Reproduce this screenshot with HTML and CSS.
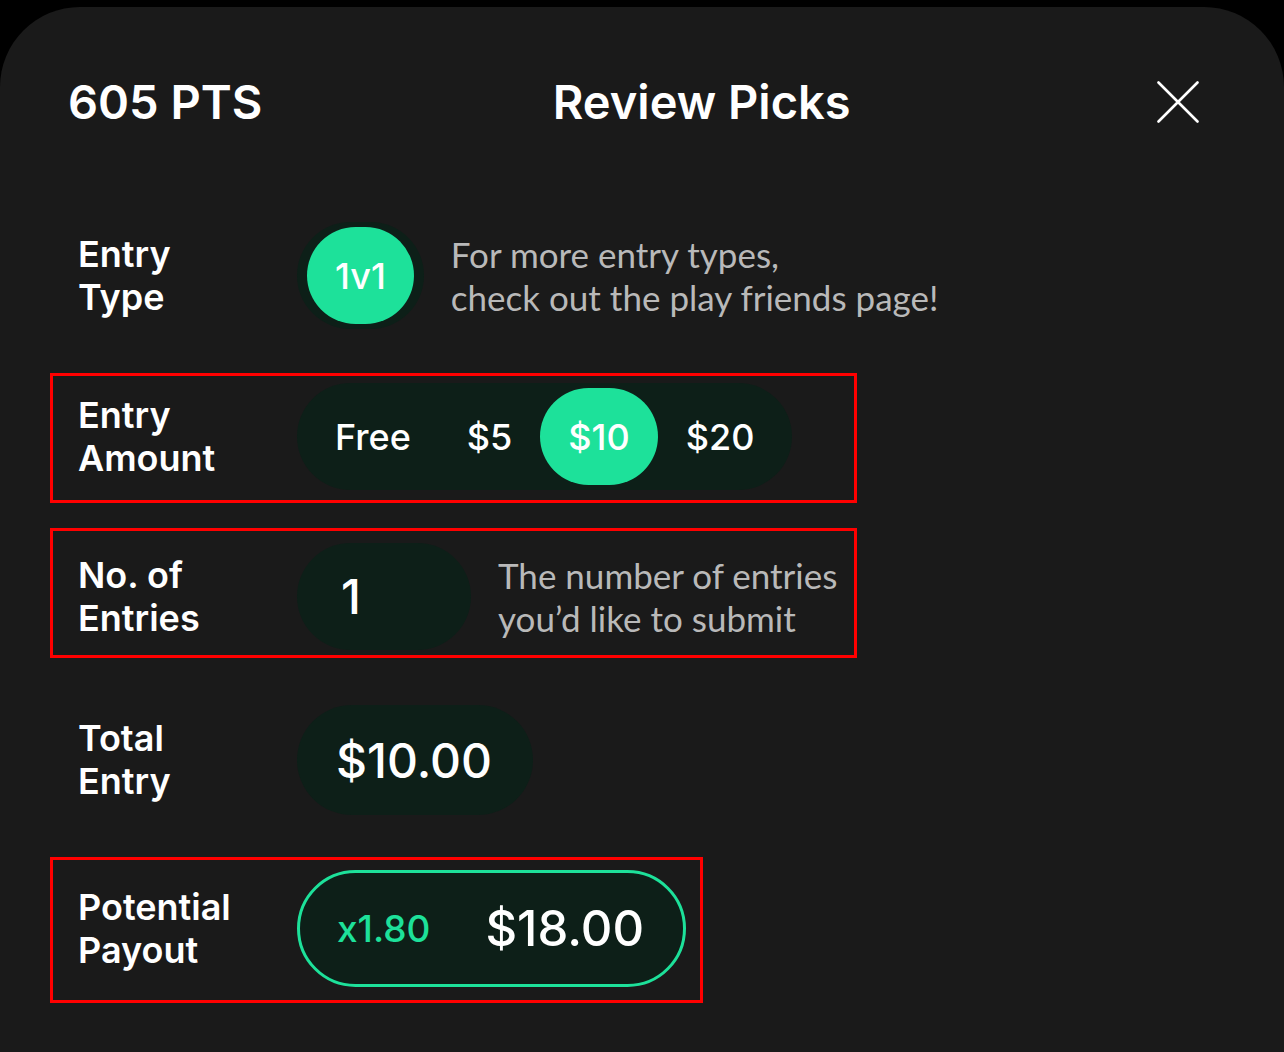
FILE: index.html
```html
<!DOCTYPE html>
<html lang="en">
  <head>
    <meta charset="UTF-8" />
    <title>Review Picks</title>
    <link rel="stylesheet" href="styles.css">
  </head>
  <body>
    <div class="sheet">
      <header class="sheet-header">
        <span class="points">605 PTS</span>
        <h1 class="title">Review Picks</h1>
        <button class="close-btn" aria-label="Close">
          <svg width="42" height="42" viewBox="0 0 42 42">
            <path d="M1.5 1.5 L40.5 40.5 M40.5 1.5 L1.5 40.5" stroke="#fff" stroke-width="2.6" stroke-linecap="round" fill="none" />
          </svg>
        </button>
      </header>

      <div class="rows">
        <div class="row">
          <div class="label">Entry<br>Type</div>
          <div class="segmented">
            <span class="option active">1v1</span>
          </div>
          <p class="hint">For more entry types,<br>check out the play friends page!</p>
        </div>

        <div class="row marked wide">
          <div class="label">Entry<br>Amount</div>
          <div class="segmented">
            <span class="option">Free</span>
            <span class="option">$5</span>
            <span class="option active">$10</span>
            <span class="option">$20</span>
          </div>
        </div>

        <div class="row marked wide entries">
          <div class="label">No. of<br>Entries</div>
          <div class="pill count">1</div>
          <p class="hint">The number of entries<br>you’d like to submit</p>
        </div>

        <div class="row total-row">
          <div class="label">Total<br>Entry</div>
          <div class="pill total">$10.00</div>
        </div>

        <div class="row marked narrow payout-row">
          <div class="label">Potential<br>Payout</div>
          <div class="pill payout">
            <span class="multiplier">x1.80</span>
            <span class="payout-value">$18.00</span>
          </div>
        </div>
      </div>
    </div>
  </body>
</html>
```

FILE: styles.css
```css
body {
  margin: 0;
  background: #000;
  font-family: Inter, "Liberation Sans", sans-serif;
  color: #fff;
}

.sheet {
  margin-top: 7px;
  min-height: 1045px;
  background: #1a1a1a;
  border-radius: 80px 80px 0 0;
  padding-top: 66px;
  box-sizing: border-box;
}

.sheet-header {
  display: flex;
  align-items: center;
  justify-content: space-between;
  padding: 0 85px 0 68px;
}

.points,
.title {
  font-size: 47px;
  font-weight: 600;
  line-height: 57px;
  margin: 0;
}

.close-btn {
  background: none;
  border: none;
  padding: 0;
  margin-left: 16px;
  width: 42px;
  height: 42px;
  cursor: pointer;
}

.close-btn svg {
  display: block;
}

.rows {
  display: flex;
  flex-direction: column;
  align-items: flex-start;
  gap: 31px;
  margin-top: 82px;
  padding-left: 50px;
}

.row {
  display: flex;
  align-items: center;
  box-sizing: border-box;
  padding: 7px 0 10px 25px;
  border: 3px solid transparent;
}

.row.marked {
  border-color: #ff0000;
}

.row.wide {
  width: 807px;
}

.row.narrow {
  width: 653px;
}

.row.entries {
  margin-top: -6px;
  padding: 12px 0 5px 25px;
}

.row.total-row {
  margin-top: 6px;
}

.row.payout-row {
  margin-top: -2px;
  padding: 10px 0 13px 25px;
}

.label {
  flex: 0 0 219px;
  font-size: 36px;
  font-weight: 600;
  line-height: 43px;
}

.segmented {
  display: flex;
  padding: 5px 10px;
  background: #0d1f18;
  border-radius: 54px;
}

.option {
  display: flex;
  align-items: center;
  height: 97px;
  padding: 0 28px;
  border-radius: 49px;
  font-size: 36px;
  font-weight: 500;
}

.option.active {
  background: #1de19a;
}

.hint {
  margin: 0 0 0 27px;
  font-family: Lato, "Open Sans", sans-serif;
  font-size: 35px;
  line-height: 43px;
  color: #b9b9b9;
}

.pill {
  display: flex;
  align-items: center;
  box-sizing: border-box;
  background: #0d1f18;
  border-radius: 60px;
  font-size: 48px;
  font-weight: 500;
}

.pill.count {
  width: 174px;
  height: 107px;
  padding-left: 44px;
}

.pill.total {
  height: 110px;
  padding: 0 41px 0 39px;
}

.pill.payout {
  height: 117px;
  padding: 0 39px 0 37px;
  border: 3px solid #1de19a;
  gap: 55px;
}

.multiplier {
  font-size: 37px;
  color: #1de19a;
}

.payout-value {
  font-size: 49px;
}
```
